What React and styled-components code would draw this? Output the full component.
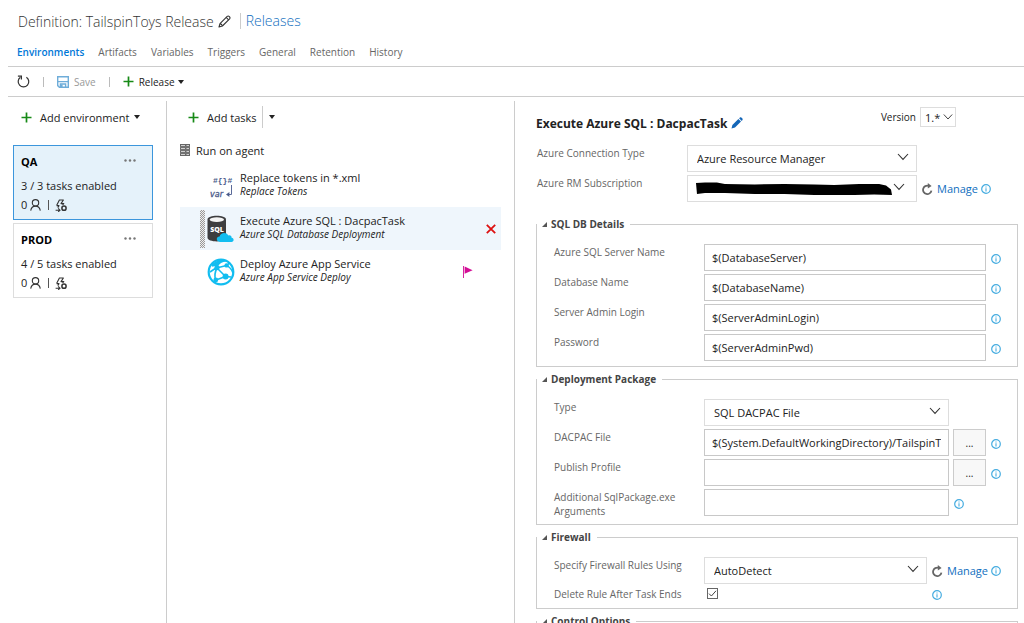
import React from 'react';
import styled, { createGlobalStyle } from 'styled-components';

const environments = [
    { name: 'QA', tasks: '3 / 3 tasks enabled', approvers: 0, selected: true },
    { name: 'PROD', tasks: '4 / 5 tasks enabled', approvers: 0 },
];

const tasks = [
    { tit: 'Replace tokens in *.xml', sub: 'Replace Tokens', icon: <TokensIcon /> },
    { tit: 'Execute Azure SQL : DacpacTask', sub: 'Azure SQL Database Deployment', icon: <SqlIcon />, selected: true },
    { tit: 'Deploy Azure App Service', sub: 'Azure App Service Deploy', icon: <WebAppIcon />, flag: true },
];

const dbFields = [
    { id: 'server', label: 'Azure SQL Server Name', value: '$(DatabaseServer)' },
    { id: 'database', label: 'Database Name', value: '$(DatabaseName)' },
    { id: 'login', label: 'Server Admin Login', value: '$(ServerAdminLogin)' },
    { id: 'password', label: 'Password', value: '$(ServerAdminPwd)' },
];

export default function App() {
    return (
        <Page>
            <GlobalStyle />
            <Header>
                <Title>Definition: TailspinToys Release</Title>
                <IconButton aria-label="Rename definition">
                    <PencilIcon />
                </IconButton>
                <ReleasesLink href="#releases">Releases</ReleasesLink>
            </Header>
            <Tabs>
                {['Environments', 'Artifacts', 'Variables', 'Triggers', 'General', 'Retention', 'History'].map((tab, i) => (
                    <Tab key={tab} href={`#${tab.toLowerCase()}`} $active={i === 0}>
                        {tab}
                    </Tab>
                ))}
            </Tabs>
            <Toolbar>
                <IconButton aria-label="Refresh">
                    <RefreshIcon />
                </IconButton>
                <Divider />
                <ToolButton disabled>
                    <SaveIcon />
                    Save
                </ToolButton>
                <Divider />
                <ToolButton>
                    <PlusIcon />
                    Release
                    <Caret />
                </ToolButton>
            </Toolbar>
            <Columns>
                <EnvColumn>
                    <AddButton>
                        <PlusIcon />
                        Add environment
                        <Caret />
                    </AddButton>
                    <EnvList>
                        {environments.map((env) => (
                            <EnvCard key={env.name} {...env} />
                        ))}
                    </EnvList>
                </EnvColumn>
                <TaskColumn>
                    <AddRow>
                        <AddButton>
                            <PlusIcon />
                            Add tasks
                        </AddButton>
                        <MoreButton aria-label="More task options">
                            <Caret />
                        </MoreButton>
                    </AddRow>
                    <Phase>
                        <AgentIcon />
                        Run on agent
                    </Phase>
                    {tasks.map((task) => (
                        <TaskItem key={task.tit} {...task} />
                    ))}
                </TaskColumn>
                <Details>
                    <DetailsHead>
                        <DetailsTitle>Execute Azure SQL : DacpacTask</DetailsTitle>
                        <IconButton aria-label="Rename task">
                            <PencilFilledIcon />
                        </IconButton>
                        <Version>
                            <label htmlFor="version">Version</label>
                            <SelectBox id="version" options={['1.*']} small />
                        </Version>
                    </DetailsHead>
                    <TopFields>
                        <Row>
                            <Label htmlFor="connection">Azure Connection Type</Label>
                            <SelectBox id="connection" options={['Azure Resource Manager']} />
                            <Trail $width={75} />
                        </Row>
                        <Row>
                            <Label htmlFor="subscription">Azure RM Subscription</Label>
                            <SelectBox id="subscription" options={['']} redacted />
                            <Manage />
                        </Row>
                    </TopFields>
                    <Group>
                        <Legend>SQL DB Details</Legend>
                        {dbFields.map((field) => (
                            <Row key={field.id}>
                                <Label htmlFor={field.id}>{field.label}</Label>
                                <Input id={field.id} defaultValue={field.value} />
                                <Trail $width={16}>
                                    <Info />
                                </Trail>
                            </Row>
                        ))}
                    </Group>
                    <Group>
                        <Legend>Deployment Package</Legend>
                        <Row>
                            <Label htmlFor="type">Type</Label>
                            <SelectBox id="type" options={['SQL DACPAC File']} />
                            <Trail $width={53} />
                        </Row>
                        <Row>
                            <Label htmlFor="dacpac">DACPAC File</Label>
                            <Input id="dacpac" defaultValue="$(System.DefaultWorkingDirectory)/TailspinT" />
                            <Trail $width={53}>
                                <Browse aria-label="Browse DACPAC file">...</Browse>
                                <Info />
                            </Trail>
                        </Row>
                        <Row>
                            <Label htmlFor="profile">Publish Profile</Label>
                            <Input id="profile" />
                            <Trail $width={53}>
                                <Browse aria-label="Browse publish profile">...</Browse>
                                <Info />
                            </Trail>
                        </Row>
                        <Row>
                            <Label htmlFor="arguments">Additional SqlPackage.exe Arguments</Label>
                            <Input id="arguments" />
                            <Trail $width={53}>
                                <Info />
                            </Trail>
                        </Row>
                    </Group>
                    <Group>
                        <Legend>Firewall</Legend>
                        <Row>
                            <Label htmlFor="firewall">Specify Firewall Rules Using</Label>
                            <SelectBox id="firewall" options={['AutoDetect']} />
                            <Manage />
                        </Row>
                        <Row $short>
                            <Label htmlFor="deleteRule">Delete Rule After Task Ends</Label>
                            <CheckCell>
                                <Checkbox id="deleteRule" type="checkbox" defaultChecked />
                                <CheckMark />
                            </CheckCell>
                            <Trail $width={75} $short>
                                <Info />
                            </Trail>
                        </Row>
                    </Group>
                    <Group>
                        <Legend>Control Options</Legend>
                    </Group>
                </Details>
            </Columns>
        </Page>
    );
}

function Legend({ children }) {
    return (
        <LegendBox>
            <svg width="5" height="5" viewBox="0 0 5 5">
                <path d="M5 0V5H0Z" fill="#555" />
            </svg>
            {children}
        </LegendBox>
    );
}

function EnvCard({ name, tasks, approvers, selected }) {
    return (
        <Card $selected={selected}>
            <CardHead>
                <CardName>{name}</CardName>
                <IconButton aria-label={`${name} options`}>
                    <svg width="12" height="3" viewBox="0 0 12 3" fill="#777">
                        <circle cx="1.5" cy="1.5" r="1.2" />
                        <circle cx="6" cy="1.5" r="1.2" />
                        <circle cx="10.5" cy="1.5" r="1.2" />
                    </svg>
                </IconButton>
            </CardHead>
            <CardTasks>{tasks}</CardTasks>
            <CardFoot>
                {approvers}
                <PersonIcon />
                <FootBar />
                <TriggerIcon />
            </CardFoot>
        </Card>
    );
}

function TaskItem({ tit, sub, icon, selected, flag }) {
    return (
        <Task $selected={selected}>
            <Grip $visible={selected} />
            {icon}
            <TaskText>
                <TaskTit>{tit}</TaskTit>
                <TaskSub>{sub}</TaskSub>
            </TaskText>
            {flag && <FlagIcon />}
            <TaskAction>
                {selected && (
                    <IconButton aria-label="Remove task">
                        <svg width="10" height="10" viewBox="0 0 10 10">
                            <path d="M0.8 0.8L9.2 9.2M9.2 0.8L0.8 9.2" stroke="#dd1111" strokeWidth="1.8" />
                        </svg>
                    </IconButton>
                )}
            </TaskAction>
        </Task>
    );
}

function SelectBox({ id, options, small, redacted }) {
    return (
        <SelectWrap $small={small}>
            <Select id={id} $small={small}>
                {options.map((o) => (
                    <option key={o}>{o}</option>
                ))}
            </Select>
            {redacted && (
                <Scribble viewBox="0 0 200 16" preserveAspectRatio="none">
                    <path d="M1 2L10 1.4L22 1.4L30 3L60 3.4L90 3L120 3.6L140 4L165 3L185 3L192 4.4L197 8.4L198 14L180 13.6L160 14L120 14L90 13L60 13L30 12L10 12L2 13Z" />
                </Scribble>
            )}
            <Chevron $small={small} $inset={redacted} viewBox="0 0 12 8">
                <path d="M1 1L6 6.4L11 1" fill="none" stroke="#333" strokeWidth="1.1" />
            </Chevron>
        </SelectWrap>
    );
}

function Manage() {
    return (
        <Trail $width={75} $centered>
            <IconButton aria-label="Refresh list">
                <ReloadIcon />
            </IconButton>
            <ManageLink href="#manage">Manage</ManageLink>
            <Info />
        </Trail>
    );
}

function Info() {
    return (
        <InfoSvg viewBox="0 0 10 10">
            <circle cx="5" cy="5" r="4.3" fill="none" stroke="#45ace0" strokeWidth="1.2" />
            <path d="M5 4.2V7.4M5 2.4V3.4" stroke="#45ace0" strokeWidth="1.1" />
        </InfoSvg>
    );
}

function CheckMark() {
    return (
        <CheckSvg viewBox="0 0 11 11">
            <path d="M2 5.6L4.4 8L9 2.8" fill="none" stroke="#444" strokeWidth="1" />
        </CheckSvg>
    );
}

function Caret() {
    return (
        <svg width="6" height="4" viewBox="0 0 6 4">
            <path d="M0 0H6L3 4Z" fill="#222" />
        </svg>
    );
}

function PlusIcon() {
    return (
        <svg width="11" height="11" viewBox="0 0 11 11">
            <path d="M5.5 0.5V10.5M0.5 5.5H10.5" stroke="#178a17" strokeWidth="1.7" />
        </svg>
    );
}

function PencilIcon() {
    return (
        <svg width="13" height="13" viewBox="0 0 13 13" fill="none" stroke="#333" strokeWidth="1.1" strokeLinejoin="round">
            <path d="M1 12L2 8.6L9.2 1.4C10.6 0.2 12.8 2.2 11.6 3.8L4.4 11Z" />
            <path d="M2 8.6C3.2 8.8 4.2 9.8 4.4 11M8.2 2.4L10.6 4.8" />
        </svg>
    );
}

function PencilFilledIcon() {
    return (
        <svg width="12" height="12" viewBox="0 0 12 12" fill="#1466b8">
            <path d="M0.5 11.5L1.4 8L7.4 2L10 4.6L4 10.6Z" />
            <path d="M8.1 1.3L9 0.5C10.2 -0.2 12.2 1.8 11.5 3L10.7 3.9Z" />
        </svg>
    );
}

function RefreshIcon() {
    return (
        <svg width="13" height="13" viewBox="0 0 13 13" fill="none" stroke="#333" strokeWidth="1.2">
            <path d="M9.4 2.2A5.3 5.3 0 1 1 3.4 2.3" />
            <path d="M0.9 1.1H4.4V4.6" />
        </svg>
    );
}

function ReloadIcon() {
    return (
        <svg width="11" height="12" viewBox="0 0 11 12">
            <path d="M9.4 7.6A4.2 4.2 0 1 1 6.6 2.9" fill="none" stroke="#666" strokeWidth="1.8" />
            <path d="M5.8 0V5.6L9.6 2.9Z" fill="#666" />
        </svg>
    );
}

function SaveIcon() {
    return (
        <svg width="12" height="12" viewBox="0 0 12 12">
            <path d="M0.7 0.7H11.3V11.3H2.4L0.7 9.6Z" fill="none" stroke="#6fadd9" strokeWidth="1.4" />
            <path d="M1 5.6H11M3.4 11V8H8.6V11" fill="none" stroke="#6fadd9" strokeWidth="1.4" />
            <path d="M4 8.6H5.6V11H4Z" fill="#6fadd9" />
        </svg>
    );
}

function PersonIcon() {
    return (
        <svg width="11" height="12" viewBox="0 0 11 12" fill="none" stroke="#333" strokeWidth="1.1">
            <circle cx="5.5" cy="3.8" r="3.2" />
            <path d="M0.7 11.6C1.2 8.8 3 7.1 5.5 7.1S9.8 8.8 10.3 11.6" />
        </svg>
    );
}

function TriggerIcon() {
    return (
        <svg width="12" height="13" viewBox="0 0 12 13" fill="none" stroke="#333" strokeWidth="1.1">
            <path d="M1.6 6.6L4.4 1H8.4L6 4.6H8.8L7.6 5.8M1.6 6.6H4L2.8 8.6" strokeLinejoin="round" />
            <circle cx="9" cy="9.2" r="2.1" strokeWidth="1.5" />
            <path d="M0.6 11.2H4.6M3.2 9.4L5 11.2L3.2 12.8" />
        </svg>
    );
}

function AgentIcon() {
    return (
        <svg width="10" height="12" viewBox="0 0 10 12">
            <path d="M0 0H10V12H0Z" fill="#666" />
            <path d="M1 1.5H5M1 4.5H5M1 7.5H5M1 10.5H5M6.5 1.5H9M6.5 4.5H9M6.5 7.5H9M6.5 10.5H9" stroke="#ddd" strokeWidth="0.9" />
            <path d="M0 3H10M0 6H10M0 9H10" stroke="#999" strokeWidth="0.5" />
        </svg>
    );
}

function FlagIcon() {
    return (
        <svg width="10" height="12" viewBox="0 0 10 12">
            <path d="M0.5 0V12" stroke="#d6249f" />
            <path d="M1.6 0.6L9.6 4.2L1.6 7.8Z" fill="#d40f96" />
        </svg>
    );
}

function TokensIcon() {
    return (
        <svg width="28" height="28" viewBox="0 0 28 28" fill="#4a5a8a">
            <text x="6" y="11" fontFamily="Liberation Mono, monospace" fontSize="8" fontWeight="700">{'#{}#'}</text>
            <text x="3" y="25" fontFamily="DejaVu Sans, sans-serif" fontSize="8" fontStyle="italic" stroke="#4a5a8a" strokeWidth="0.3">var</text>
            <path d="M24.5 13V22.5H21" fill="none" stroke="#5b6a99" />
            <path d="M19 22.5L22.4 20V25Z" />
        </svg>
    );
}

function SqlIcon() {
    return (
        <svg width="28" height="28" viewBox="0 0 28 28">
            <path d="M0.5 4.6C0.5 -0.4 19 -0.4 19 4.6V22.8C19 27.6 0.5 27.6 0.5 22.8Z" fill="#3d3d3f" />
            <ellipse cx="9.8" cy="4.6" rx="7.2" ry="2.4" fill="#f4f4f4" />
            <text x="10" y="17" textAnchor="middle" fontFamily="Open Sans, sans-serif" fontSize="7" fontWeight="800" fill="#fff">SQL</text>
            <path d="M13 27C8.6 26.6 9 21.6 12.6 21.6C13.4 17.4 19.4 16.8 21.2 20.4C23.4 19.8 24.8 21 24.6 22.8C27.4 23 27.2 27 24.6 27Z" fill="#12bdf0" />
        </svg>
    );
}

function WebAppIcon() {
    return (
        <svg width="28" height="28" viewBox="0 0 28 28">
            <circle cx="14" cy="14" r="12.3" fill="#fff" stroke="#12bdf0" strokeWidth="2.2" />
            <path d="M4.4 6.6C9 2 15 0.6 19.6 3.4C15 3.6 12.4 5.8 10.6 8.4C8.6 7.8 6.6 8 5.6 9Z" fill="#12bdf0" />
            <path d="M10 10L18.5 18.5M19.5 7.5L10.5 9.8M18.5 18.5L9 22M19.5 7.5C22 8.4 25 12 26 15M10 10C8.4 13 7 17 8.6 22M19.5 7.5L23 4.6M18.5 18.5L24 19M9 10L3 14" fill="none" stroke="#12bdf0" strokeWidth="1.6" />
            <circle cx="10" cy="9.6" r="2.6" fill="#12bdf0" />
            <circle cx="19.6" cy="7.4" r="2.2" fill="#12bdf0" />
            <circle cx="18.6" cy="18.6" r="3" fill="#12bdf0" />
            <circle cx="8.8" cy="22" r="2.4" fill="#12bdf0" />
        </svg>
    );
}

const GlobalStyle = createGlobalStyle`
    * {
        box-sizing: border-box;
    }
    body {
        margin: 0;
        overflow: hidden;
        background: #fff;
    }
    body, button, input, select {
        font-family: "Open Sans", "Noto Sans", sans-serif;
        font-size: 11px;
        color: #222;
    }
    svg {
        display: block;
        flex: none;
    }
    a {
        text-decoration: none;
    }
`;

const Page = styled.div`
    height: 100vh;
    display: flex;
    flex-direction: column;
    padding-left: 8px;
    overflow: hidden;
`;

const Header = styled.header`
    display: flex;
    align-items: center;
    height: 42px;
    padding-left: 10px;
    flex: none;
`;

const Title = styled.h1`
    margin: 0 4px 0 0;
    font-size: 14px;
    font-weight: 300;
    color: #333;
`;

const IconButton = styled.button`
    display: flex;
    padding: 0;
    border: 0;
    background: none;
    cursor: pointer;
`;

const ReleasesLink = styled.a`
    margin-left: 9px;
    padding-left: 5px;
    border-left: 1px solid #ccc;
    font-size: 14px;
    line-height: 16px;
    font-weight: 300;
    color: #106ebe;
`;

const Tabs = styled.nav`
    display: flex;
    gap: 14px;
    height: 25px;
    padding: 3px 0 0 9px;
    border-bottom: 1px solid #ccc;
    flex: none;
`;

const Tab = styled.a`
    font-size: 10px;
    line-height: 14px;
    font-weight: ${(p) => (p.$active ? 600 : 400)};
    color: ${(p) => (p.$active ? '#0078d7' : '#666')};
`;

const Toolbar = styled.div`
    display: flex;
    align-items: center;
    gap: 13px;
    height: 30px;
    padding-left: 9px;
    border-bottom: 1px solid #ccc;
    flex: none;
`;

const Divider = styled.span`
    width: 1px;
    height: 10px;
    background: #bbb;
`;

const ToolButton = styled.button`
    display: flex;
    align-items: center;
    gap: 5px;
    padding: 0;
    border: 0;
    background: none;
    font-size: 10px;

    &:disabled {
        color: #999;
    }

    svg + svg {
        margin-left: -2px;
    }
`;

const Columns = styled.main`
    flex: 1;
    min-height: 0;
    display: flex;
    padding-top: 4px;
`;

const EnvColumn = styled.section`
    width: 159px;
    flex: none;
    padding: 5px 13px 0 5px;
    border-right: 1px solid #ccc;
`;

const AddButton = styled.button`
    display: flex;
    align-items: center;
    gap: 8px;
    height: 22px;
    padding: 0 5px 0 8px;
    border: 0;
    background: none;

    svg + svg {
        margin-left: -3px;
    }
`;

const EnvList = styled.div`
    display: flex;
    flex-direction: column;
    gap: 3px;
    margin-top: 17px;
`;

const Card = styled.article`
    padding: 8px 7px 7px;
    border: 1px solid ${(p) => (p.$selected ? '#3c96dc' : '#ddd')};
    background: ${(p) => (p.$selected ? '#e5f2fa' : '#fff')};
`;

const CardHead = styled.div`
    display: flex;
    align-items: center;
    justify-content: space-between;
    padding-right: 9px;

    ${IconButton} {
        margin-bottom: 3px;
    }
`;

const CardName = styled.h2`
    margin: 0;
    font-size: 11px;
    line-height: 16px;
    font-weight: 700;
    color: #000;
`;

const CardTasks = styled.div`
    margin-top: 8px;
    font-size: 11px;
    line-height: 16px;
`;

const CardFoot = styled.div`
    display: flex;
    align-items: center;
    gap: 3px;
    margin-top: 4px;
    line-height: 14px;
`;

const FootBar = styled.span`
    width: 1px;
    height: 10px;
    margin: 0 3px 0 4px;
    background: #555;
`;

const TaskColumn = styled.section`
    width: 348px;
    flex: none;
    padding: 5px 13px 0;
    border-right: 1px solid #ccc;
`;

const AddRow = styled.div`
    display: flex;
`;

const MoreButton = styled.button`
    display: flex;
    align-items: center;
    padding: 0 6px;
    border: 0;
    border-left: 1px solid #ccc;
    background: none;
`;

const Phase = styled.div`
    display: flex;
    align-items: center;
    gap: 6px;
    height: 16px;
    margin: 14px 0 6px;
`;

const Task = styled.div`
    display: flex;
    align-items: center;
    height: 43px;
    padding: 0 2px 0 20px;
    background: ${(p) => (p.$selected ? '#eff6fc' : 'transparent')};
`;

const Grip = styled.span`
    width: 5px;
    height: 38px;
    margin-right: 2px;
    visibility: ${(p) => (p.$visible ? 'visible' : 'hidden')};
    background: repeating-conic-gradient(#999 0 25%, #eee 0 50%) 0 0 / 2px 2px;
`;

const TaskText = styled.div`
    flex: 1;
    margin-left: 5px;
    padding-bottom: 3px;
`;

const TaskTit = styled.div`
    font-size: 11px;
    line-height: 15px;
`;

const TaskSub = styled.div`
    font-size: 10px;
    line-height: 13px;
    font-style: italic;
`;

const TaskAction = styled.div`
    display: flex;
    justify-content: center;
    width: 26px;
    padding-left: 10px;
`;

const Details = styled.section`
    flex: 1;
    min-width: 0;
    padding: 6px 6px 0 21px;
    overflow: hidden;
`;

const DetailsHead = styled.div`
    display: flex;
    align-items: center;
    height: 32px;
`;

const DetailsTitle = styled.h2`
    margin: 0 4px 0 0;
    font-size: 12px;
    font-weight: 700;
`;

const Version = styled.div`
    display: flex;
    align-items: center;
    gap: 4px;
    margin: 0 62px 12px auto;
    font-size: 10px;
`;

const TopFields = styled.div`
    margin: 6px 26px 15px 1px;
    display: flex;
    flex-direction: column;
    gap: 3px;
`;

const Group = styled.fieldset`
    min-width: 0;
    margin: 0 0 5px;
    padding: 13px 15px 5px 17px;
    border: 1px solid #ccc;
`;

const LegendBox = styled.legend`
    display: flex;
    align-items: center;
    gap: 4px;
    margin-left: -17px;
    padding: 0 6px 0 5px;
    font-size: 10px;
    line-height: 14px;
    font-weight: 700;
    color: #444;
`;

const Row = styled.div`
    display: flex;
    min-height: ${(p) => (p.$short ? '19px' : '27px')};
    padding-top: ${(p) => (p.$short ? '2px' : '0')};

    ${Group} & + & {
        margin-top: 3px;
    }
`;

const Label = styled.label`
    width: 150px;
    flex: none;
    padding: 1px 16px 1px 0;
    font-size: 10px;
    line-height: 14px;
    color: #666;
`;

const Input = styled.input`
    flex: 1;
    min-width: 0;
    height: 27px;
    padding: 0 7px;
    border: 1px solid #c8c8c8;
    background: #fff;
`;

const SelectWrap = styled.div`
    position: relative;
    flex: ${(p) => (p.$small ? 'none' : 1)};
    height: ${(p) => (p.$small ? '20px' : '27px')};
`;

const Select = styled.select`
    appearance: none;
    width: 100%;
    height: 100%;
    padding: ${(p) => (p.$small ? '0 14px 0 4px' : '0 24px 0 9px')};
    border: 1px solid #ddd;
    border-radius: 0;
    background: #fff;
`;

const Chevron = styled.svg`
    position: absolute;
    top: ${(p) => (p.$small ? '6px' : '8px')};
    right: ${(p) => (p.$small ? '3px' : p.$inset ? '12px' : '8px')};
    width: ${(p) => (p.$small ? '10px' : '12px')};
    height: 8px;
    pointer-events: none;
`;

const Scribble = styled.svg`
    position: absolute;
    top: 6px;
    left: 8px;
    width: calc(100% - 31px);
    height: 16px;
    pointer-events: none;
`;

const Trail = styled.div`
    display: flex;
    align-items: center;
    gap: 5px;
    width: ${(p) => p.$width}px;
    height: ${(p) => (p.$short ? '15px' : '27px')};
    padding: ${(p) => (p.$centered ? '0' : '3px')} 0 0 5px;
    flex: none;
`;

const ManageLink = styled.a`
    width: 39px;
    margin-left: -1px;
    font-size: 11px;
    color: #106ebe;
`;

const InfoSvg = styled.svg`
    width: 10px;
    height: 10px;
`;

const Browse = styled.button`
    width: 33px;
    height: 27px;
    margin: -3px 0 0 -1px;
    padding: 0;
    flex: none;
    border: 1px solid #ccc;
    background: #f8f8f8;
    font-size: 10px;
`;

const CheckCell = styled.div`
    position: relative;
    flex: 1;
    padding: 2px 0 0 3px;
`;

const Checkbox = styled.input`
    appearance: none;
    display: block;
    width: 11px;
    height: 11px;
    margin: 0;
    border: 1px solid #666;
`;

const CheckSvg = styled.svg`
    position: absolute;
    top: 2px;
    left: 3px;
    width: 11px;
    height: 11px;
    pointer-events: none;

    ${Checkbox}:not(:checked) + & {
        display: none;
    }
`;
